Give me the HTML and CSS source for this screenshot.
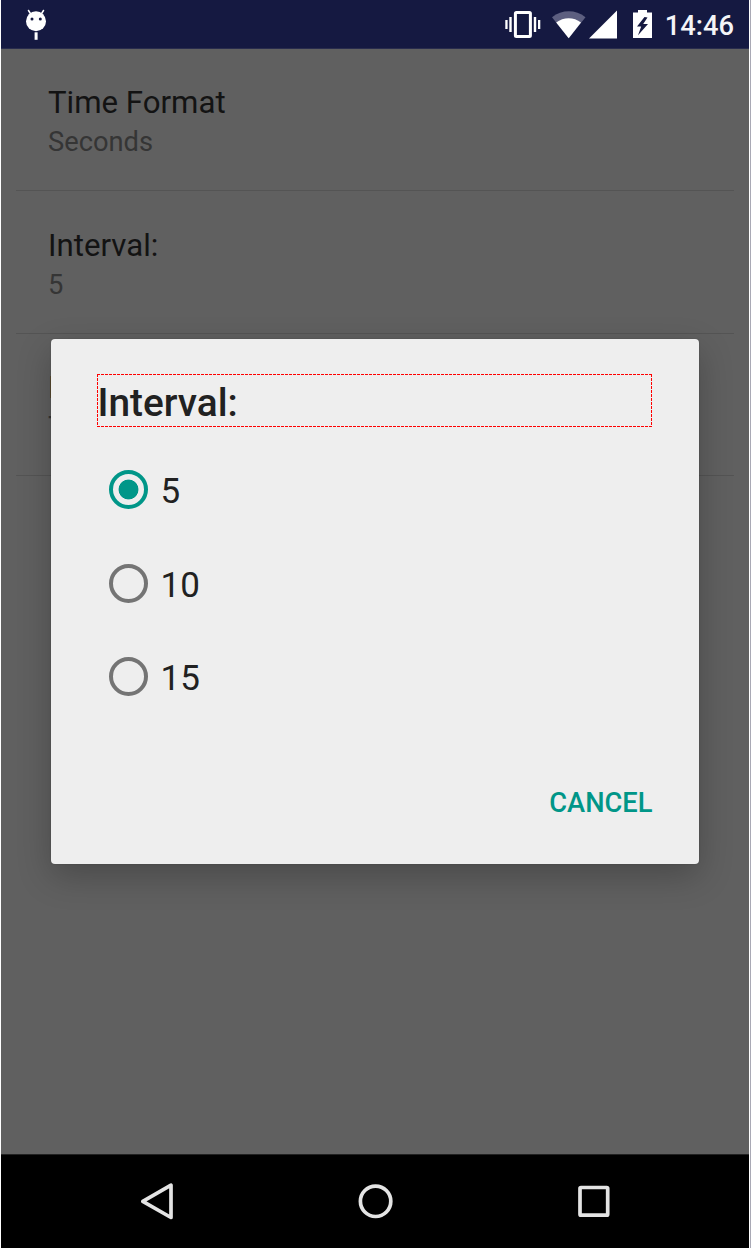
FILE: index.html
```html
<!DOCTYPE html>
<html lang="en">
<head>
<meta charset="utf-8">
<title>Settings</title>
<link rel="stylesheet" href="styles.css">
</head>
<body>
<div class="screen">
  <header class="status">
    <svg class="debug-icon" width="24" height="34" viewBox="24 7 24 34" fill="#fff">
      <path d="M28.500 10.500l2.500 4M43.500 10.500l-2.500 4" stroke="#fff" stroke-width="1.500" stroke-linecap="round"/>
      <ellipse cx="36" cy="21.300" rx="10" ry="10"/>
      <rect x="34.600" y="32.300" width="3" height="7.500"/>
      <circle cx="32" cy="19" r="1.500" fill="#151941"/><circle cx="40.300" cy="19" r="1.500" fill="#151941"/>
    </svg>
    <div class="status-right">
      <svg width="150" height="34" viewBox="502 7 150 34" fill="#fff">
        <rect x="515.400" y="12.400" width="15" height="24" rx="1" fill="none" stroke="#fff" stroke-width="3"/>
        <path d="M505.300 20h2.300v9h-2.300zM509.300 17h2.400v15h-2.400zM533.800 17h2.400v15h-2.400zM538 20h2.300v9H538z"/>
        <path d="M552 17.200C562 9.300 575.500 9.300 585.500 17.200L568.700 38.200Z" fill="#5d5f80"/>
        <path d="M556.200 22.500C563.500 16.800 573.800 16.800 581 22.500L568.700 38.200Z"/>
        <path d="M617 10.500V38.500H589Z"/>
        <path d="M633 12.500h5V10h9v2.500h5V38h-19z"/>
        <path d="M644.500 17l-7.500 9.500h4.200l-3.200 8.800 10-11.300h-4.800l4.300-6.500z" fill="#151941"/>
      </svg>
      <span class="clock">14:46</span>
    </div>
  </header>
  <main class="prefs">
    <section class="pref"><div class="pref-title">Time Format</div><div class="pref-value">Seconds</div></section>
    <section class="pref"><div class="pref-title">Interval:</div><div class="pref-value">5</div></section>
    <section class="pref"><div class="pref-title">I</div><div class="pref-value">T</div></section>
  </main>
  <nav class="nav">
    <svg class="nav-svg" viewBox="0 0 748 93" fill="none" stroke="#e4e4e4" stroke-width="3.700" stroke-linejoin="round">
      <path d="M141.800 46.300L170 30.200V62.500Z"/>
      <circle cx="374.600" cy="46.300" r="15.200"/>
      <rect x="579" y="32.500" width="27.700" height="27.700" rx="1"/>
    </svg>
  </nav>
  <div class="dialog" role="dialog">
    <div class="heading">
      <svg class="outline" width="555" height="53" fill="none" stroke="#f00" stroke-dasharray="3 1">
        <path d="M0 .5H555M0 52.500H555M.5 0V53M554.500 0V53"/>
      </svg>
      <h1>Interval:</h1>
    </div>
    <div class="options">
      <div class="option"><span class="radio checked"></span><span class="label">5</span></div>
      <div class="option"><span class="radio"></span><span class="label">10</span></div>
      <div class="option"><span class="radio"></span><span class="label">15</span></div>
    </div>
    <div class="actions"><span class="cancel">CANCEL</span></div>
  </div>
</div>
</body>
</html>
```
FILE: styles.css
```css
* { box-sizing: border-box; }
body { margin: 0; width: 751px; height: 1248px; overflow: hidden; background: #fff; border-right: 1px solid #a9a9b5; font-family: Roboto, sans-serif; }
.screen { position: relative; width: 748px; height: 1248px; margin-left: 1px; background: #606060; display: flex; flex-direction: column; overflow: hidden; }
.status { height: 49px; background: #151941; border-bottom: 1px solid #292c4d; display: flex; justify-content: space-between; padding: 7px 15px 0 23px; flex: none; }
.status-right { display: flex; }
.clock { font-size: 27.300px; font-weight: 500; line-height: 38px; color: #f4f4f7; margin-left: 13px; }
.prefs { flex: 1; padding: 0 15px; }
.pref { height: 142.300px; padding: 34px 0 0 32px; border-bottom: 1px solid #545454; }
.pref + .pref { padding-top: 34.600px; }
.pref-title { font-size: 31.200px; line-height: 40px; color: #131313; }
.pref-value { font-size: 27.300px; line-height: 38px; color: #353535; }
.nav { height: 94px; background: #000; border-top: 1px solid #222; flex: none; }
.nav-svg { display: block; width: 748px; height: 93px; }
.dialog { position: absolute; left: 50px; top: 339px; width: 648px; height: 525px; padding: 35px 46px 0; background: #eee; border-radius: 4px; box-shadow: 0 12px 34px rgba(0,0,0,.24), 0 0 2px rgba(0,0,0,.2); display: flex; flex-direction: column; }
.heading { position: relative; width: 555px; height: 53px; }
.outline { position: absolute; inset: 0; }
h1 { margin: 0; padding-left: .5px; font-size: 38.800px; font-weight: 500; line-height: 57.500px; color: #212121; }
.options { padding: 16px 0 0 12px; }
.option { height: 93.600px; display: flex; align-items: center; gap: 12.500px; }
.radio { width: 39px; height: 39px; border: 4px solid #747474; border-radius: 50%; }
.radio.checked { border-color: #009688; background: radial-gradient(circle, #009688 9.500px, transparent 10.300px); }
.label { font-size: 35px; line-height: 40px; color: #212121; padding-top: 5px; }
.actions { display: flex; justify-content: flex-end; padding: 61px .5px 0 0; }
.cancel { font-size: 27.300px; font-weight: 500; line-height: 36px; color: #009688; }
```
